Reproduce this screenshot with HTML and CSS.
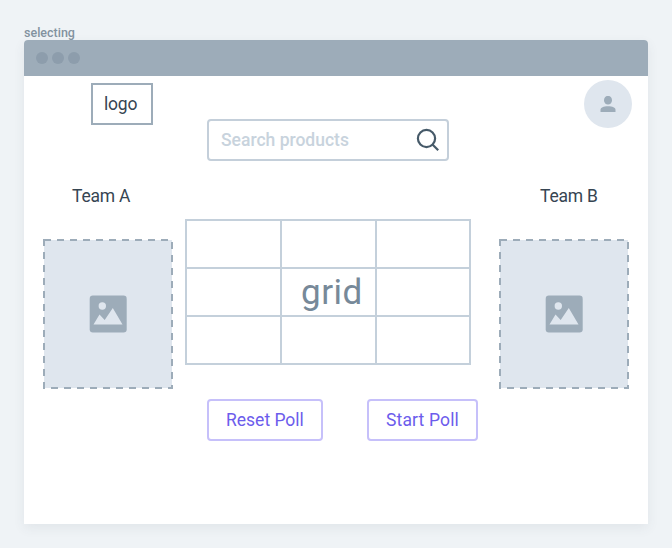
FILE: index.html
```html
<!DOCTYPE html>
<html lang="en">
<head>
<meta charset="utf-8">
<title>selecting</title>
<link rel="stylesheet" href="styles.css">
</head>
<body>
<div class="label"><span>selecting</span></div>
<div class="window">
  <div class="bar"><i></i><i></i><i></i></div>
  <header class="header">
    <div class="logo"><span>logo</span></div>
    <div class="search">
      <span>Search products</span>
      <svg width="24" height="24" viewBox="0 0 24 24"><circle cx="10.5" cy="10.5" r="8.600"/><path d="M16.500 16.500 22.200 22.200"/></svg>
    </div>
    <div class="avatar">
      <svg width="16" height="16" viewBox="0 0 16 16"><ellipse cx="8" cy="4.2" rx="4" ry="4.4"/><path d="M.5 16v-2.2C.5 11.500 3.500 10.300 8 10.300s7.500 1.200 7.500 3.500V16z"/></svg>
    </div>
  </header>
  <main class="main">
    <section class="team">
      <h2><span>Team A</span></h2>
      <svg width="130" height="150" viewBox="0 0 130 150">
        <rect class="fill" x="1" y="1" width="128" height="148"/>
        <rect class="dash" x="1" y="1" width="128" height="148"/>
        <rect class="photo" x="46.700" y="56.500" width="37" height="37" rx="3.200"/>
        <circle class="fill" cx="59.300" cy="67" r="3.700"/>
        <path class="fill" d="M50.500 85.500 56.500 75.500 61.700 81 69.800 69 79.500 85.500z"/>
      </svg>
    </section>
    <section class="center">
      <div class="grid">
        <div></div><div></div><div></div>
        <div></div><div class="caption"><span>grid</span></div><div></div>
        <div></div><div></div><div></div>
      </div>
      <div class="actions">
        <button class="reset"><span>Reset Poll</span></button>
        <button class="start"><span>Start Poll</span></button>
      </div>
    </section>
    <section class="team">
      <h2><span>Team B</span></h2>
      <svg width="130" height="150" viewBox="0 0 130 150">
        <rect class="fill" x="1" y="1" width="128" height="148"/>
        <rect class="dash" x="1" y="1" width="128" height="148"/>
        <rect class="photo" x="46.700" y="56.500" width="37" height="37" rx="3.200"/>
        <circle class="fill" cx="59.300" cy="67" r="3.700"/>
        <path class="fill" d="M50.500 85.500 56.500 75.500 61.700 81 69.800 69 79.500 85.500z"/>
      </svg>
    </section>
  </main>
</div>
</body>
</html>
```
FILE: styles.css
```css
* { box-sizing: border-box; }
body {
  margin: 0;
  padding: 24px 24px 0;
  height: 548px;
  overflow: hidden;
  background: #eff3f6;
  color: #364552;
  font: 17.5px/20px Roboto, "Liberation Sans", sans-serif;
}
svg { display: block; }
.label {
  height: 16px;
  font-size: 12.5px;
  line-height: 17px;
  font-weight: 500;
  color: #82929f;
}
.window {
  height: 484px;
  background: #fff;
  border-radius: 4px 4px 0 0;
  box-shadow: 0 4px 12px rgba(60, 80, 95, .08);
}
.bar {
  display: flex;
  align-items: center;
  gap: 4px;
  height: 36px;
  padding-left: 12px;
  border-radius: 4px 4px 0 0;
  background: #9dacb9;
}
.bar i { width: 12px; height: 12px; border-radius: 50%; background: #8d9dac; }
.header {
  display: flex;
  align-items: flex-start;
  height: 85px;
}
.logo {
  width: 62px;
  height: 42px;
  margin: 7px 0 0 67px;
  padding: 9px 0 0 11px;
  border: 2px solid #9dacb9;
  letter-spacing: -.2px;
}
.search {
  display: flex;
  justify-content: space-between;
  width: 242px;
  height: 42px;
  margin: 43px 0 0 54px;
  padding: 9px 7px 0 12px;
  border: 2px solid #c4cfda;
  border-radius: 4px;
  font-weight: 500;
  color: #c8d3dd;
}
.search svg { margin-top: -2px; fill: none; stroke: #465a69; stroke-width: 2.2; }
.avatar {
  display: grid;
  place-items: center;
  width: 48px;
  height: 48px;
  margin: 4px 0 0 135px;
  border-radius: 50%;
  background: #dfe6ee;
}
.avatar svg { fill: #9dacb9; }
.main { display: flex; padding-left: 19px; }
.team { flex: none; width: 130px; padding-top: 25px; }
.team h2 { margin: 0 0 33px; padding-left: 29px; font: inherit; letter-spacing: -.2px; }
.team:last-child h2 { padding-left: 41px; }
.fill { fill: #dfe6ee; }
.dash { fill: none; stroke: #9dacb9; stroke-width: 2; stroke-dasharray: 7 6; }
.photo { fill: #9dacb9; }
.center { flex: none; width: 286px; margin: 58px 28px 0 12px; }
.grid {
  display: grid;
  grid-template-columns: 93px 93px 92px;
  grid-template-rows: repeat(3, 46px);
  gap: 2px;
  padding: 2px;
  width: 286px;
  background: #c4d0db;
}
.grid div { background: #fff; }
.grid .caption {
  padding: 4px 0 0 19px;
  font-size: 35px;
  line-height: 40px;
  letter-spacing: .5px;
  color: #778999;
}
.actions { display: flex; gap: 44px; margin: 34px 0 0 22px; }
.actions button {
  flex: none;
  height: 42px;
  padding: 0 0 0 17px;
  border: 2px solid #c6c0fa;
  border-radius: 4px;
  background: #fff;
  color: #6c5cec;
  font: inherit;
  text-align: left;
  white-space: nowrap;
}
.actions .reset { width: 116px; }
.actions .start { width: 111px; letter-spacing: .15px; }
```
